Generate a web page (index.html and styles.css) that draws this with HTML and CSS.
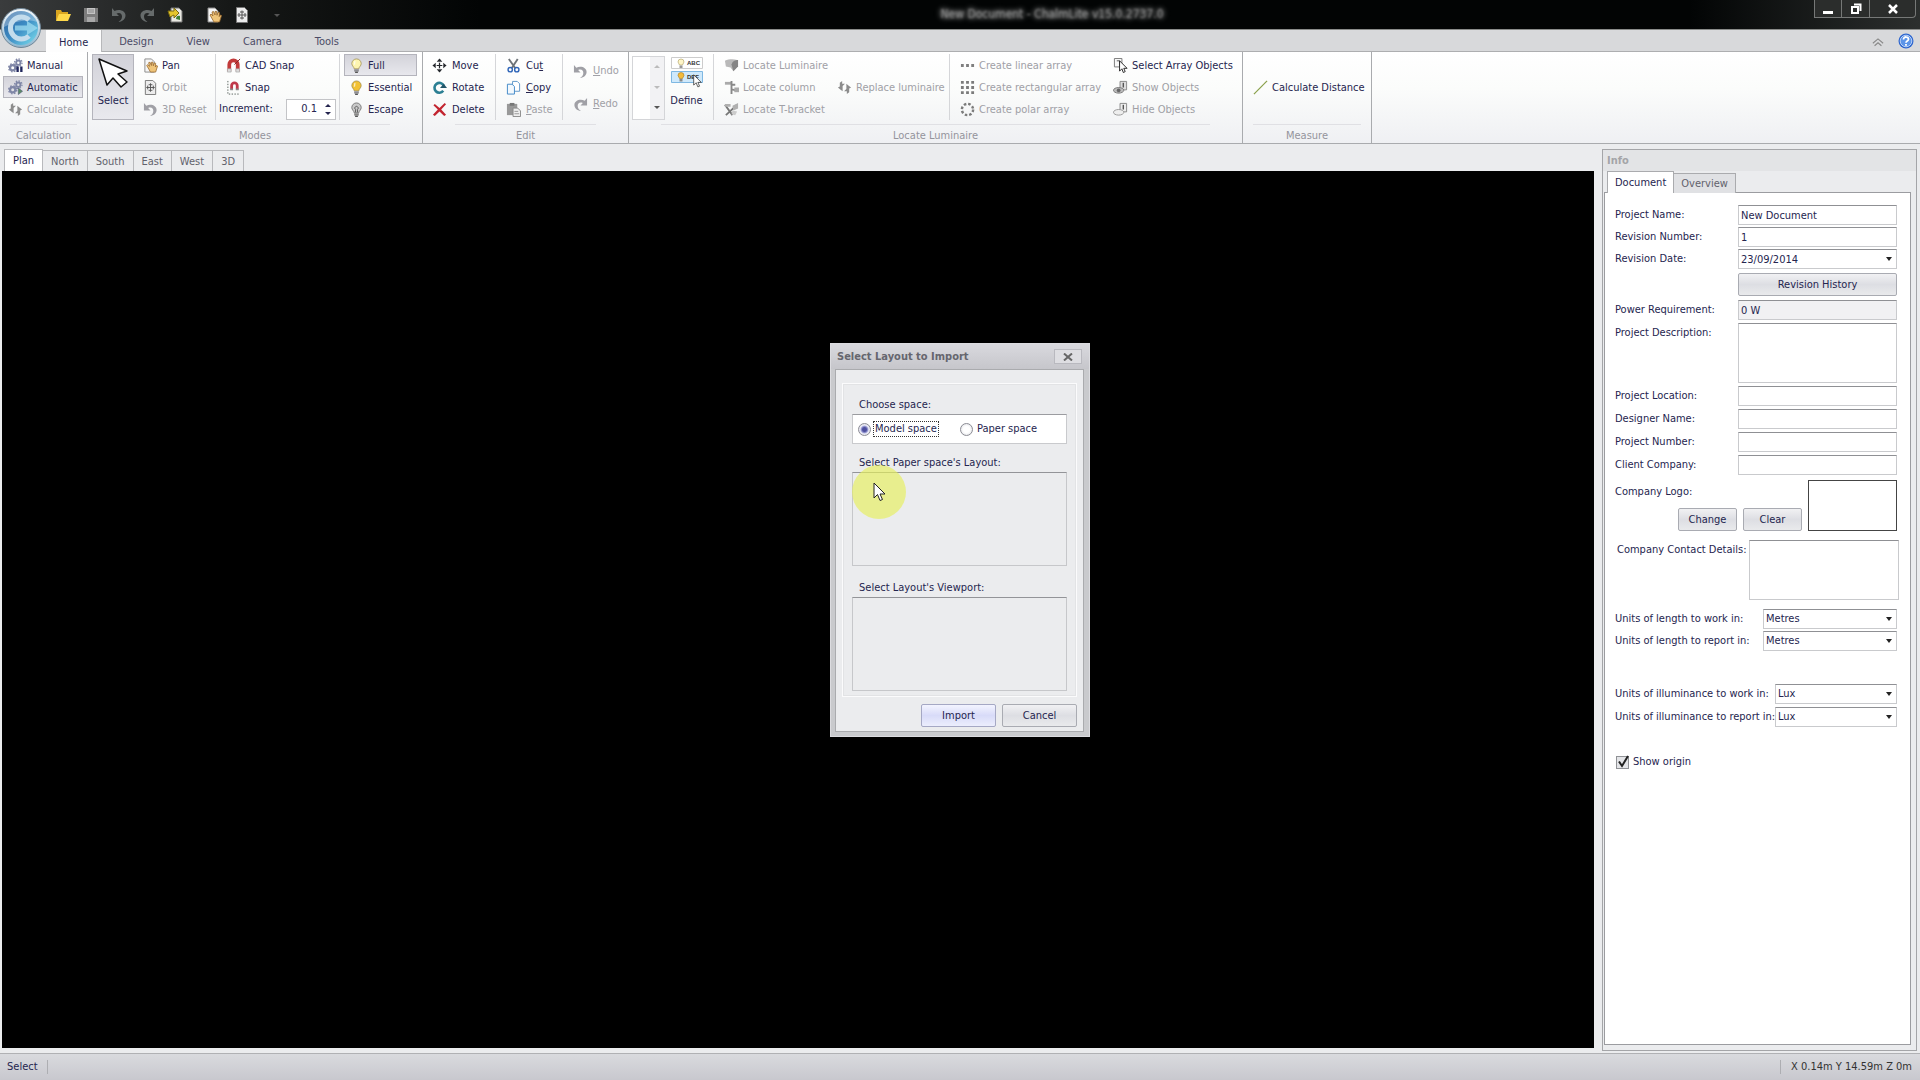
FILE: index.html
```html
<!DOCTYPE html>
<html lang="en">
<head>
<meta charset="utf-8">
<title>New Document - ChalmLite</title>
<link rel="stylesheet" href="styles.css">
</head>
<body>
<svg class="defs" aria-hidden="true">
  <defs>
    <linearGradient id="orb" x1="0" y1="0" x2="1" y2="1"><stop offset="0" stop-color="#2c5f9c"/><stop offset=".5" stop-color="#3d8cc4"/><stop offset="1" stop-color="#7fe3f0"/></linearGradient>
    <linearGradient id="ring" x1="0" y1="0" x2="0" y2="1"><stop offset="0" stop-color="#f4f8fb"/><stop offset="1" stop-color="#8fb6cf"/></linearGradient>
    <symbol id="i-folder" viewBox="0 0 16 16"><path d="M1 14V3h5l1 2h6v2H5z" fill="#d9a520"/><path d="M1 14 4 7h12l-3 7z" fill="#ffd84a"/></symbol>
    <symbol id="i-save" viewBox="0 0 16 16"><path d="M1 1h14v14H1z" fill="#7d7d7d"/><path d="M4 1h8v6H4z" fill="#c4c4c4"/><path d="M4 10h8v5H4z" fill="#a9a9a9"/><path d="M5 3h6M5 5h6" stroke="#888"/></symbol>
    <symbol id="i-undo" viewBox="0 0 16 16"><path d="M1 1v8h7L5.500 6.500C9 5 11 7 11 9.500S9.500 13.500 7.500 15C12 14.500 14.500 11.500 14.500 8.500 14.500 4 8.500 1.500 3.500 4z" fill="currentColor"/></symbol>
    <symbol id="i-redo" viewBox="0 0 16 16"><path d="M15 1v8H8l2.500-2.500C7 5 5 7 5 9.500s1.500 4 3.500 5.500C4 14.500 1.500 11.500 1.500 8.500 1.500 4 7.500 1.500 12.500 4z" fill="currentColor"/></symbol>
    <symbol id="i-export" viewBox="0 0 16 16"><path d="M5 1h7l3 3v11H4V1z" fill="#e9e9e2" stroke="#777"/><path d="M1 4h6V1l5 5-5 5V8L3 10z" fill="#e5c52c" stroke="#7a6b10"/><path d="M9 12c0-3 2-4 4-3v4z" fill="#3c7f35"/></symbol>
    <symbol id="i-hand" viewBox="0 0 16 16"><path d="M2 1h7l3 3v11H2z" fill="#f6f6f6" stroke="#8a8a8a"/><path d="m4 8 1-1 2 2-1-4 1.500-.5L9 8V4.500l1.500-.2.500 4 1-3 1.500.3-.3 4 1-1.600 1.300.5-2 6.500H8z" fill="#efc57a" stroke="#96662b" stroke-width=".8"/></symbol>
    <symbol id="i-orbit" viewBox="0 0 16 16"><path d="M2.500.5h8l3 3v12h-11z" fill="#ececec" stroke="#777"/><path d="M8 3.500v9M3.500 8h9M5 6v4M11 6v4M6 5h4M6 11h4" stroke="#555" fill="none"/></symbol>
    <symbol id="i-gears" viewBox="0 0 16 16"><g fill="none" stroke="#7f86a6"><circle cx="5" cy="10.500" r="2.800" stroke-width="2.400"/><circle cx="5" cy="10.500" r="4.300" stroke-dasharray="1.700 1.700" stroke-width="1.400"/><circle cx="11" cy="5" r="2.300" stroke-width="2"/><circle cx="11" cy="5" r="4" stroke-dasharray="1.600 1.500" stroke-width="1.300"/></g></symbol>
    <symbol id="i-manual" viewBox="0 0 16 16"><use href="#i-gears"/><path d="M9 9h2.500v6H9zM13 9h2.500v6H13z" fill="#20265c"/></symbol>
    <symbol id="i-auto" viewBox="0 0 16 16"><use href="#i-gears"/><path d="m11 8.500 4.500 3.500-4.500 3.500z" fill="#5c8a66" stroke="#4b5575" stroke-width=".6"/></symbol>
    <symbol id="i-bolt" viewBox="0 0 16 16"><path d="M5.500 1v3h3L6 6.500V12l-2.500-2L1 8l2-1V3zM10.500 15v-3h-3L10 9.500V4l2.500 2L15 8l-2 1v4z" fill="#8c8c8c"/></symbol>
    <symbol id="i-magnet" viewBox="0 0 16 16"><path d="M3.500 14V7a4.500 4.500 0 0 1 9 0v7" fill="none" stroke="#c23a3a" stroke-width="4"/><path d="M1.500 11.500h4V15h-4zM10.500 11.500h4V15h-4z" fill="#ddd" stroke="#999" stroke-width=".6"/><path d="m9 7 6-6" stroke="#7d2626"/></symbol>
    <symbol id="i-snap" viewBox="0 0 16 16"><path d="M2 1v14h13" stroke="#56615c" stroke-dasharray="1.500 1.500" fill="none"/><path d="M6 10V6a3 3 0 0 1 6 0v4" fill="none" stroke="#c0394b" stroke-width="3"/><path d="M4.500 9h3v2h-3zM10.500 9h3v2h-3z" fill="#888"/></symbol>
    <symbol id="i-bulb" viewBox="0 0 16 16"><path d="M8 1a5 5 0 0 0-5 5c0 2.500 2.500 3.500 2.500 5.500h5c0-2 2.500-3 2.500-5.500a5 5 0 0 0-5-5z" fill="currentColor" stroke="#9c8b50" stroke-width=".8"/><path d="M5.500 3.500 7 3l-.5 4-1.500.5z" fill="#fff" opacity=".7"/><path d="M5.500 12h5v2.500h-5z" fill="#8d8d92"/><path d="M6.500 14.500h3V16h-3z" fill="#555"/></symbol>
    <symbol id="i-bulboff" viewBox="0 0 16 16"><path d="M8 1a5 5 0 0 0-5 5c0 2.500 2.500 3.500 2.500 5.500h5c0-2 2.500-3 2.500-5.500a5 5 0 0 0-5-5z" fill="#c9c9c9" stroke="#777"/><path d="M7 11V8L6 6.500C7 4 9 4 10 6.500L9 8v3" fill="none" stroke="#555"/><path d="M5.500 12h5v2.500h-5z" fill="#888"/><path d="M6.500 14.500h3V16h-3z" fill="#555"/></symbol>
    <symbol id="i-move" viewBox="0 0 16 16"><path d="M8 1v14M1 8h14" stroke="#23262b" stroke-width="1.300"/><path d="M5 4h6L8 .5zM5 12h6l-3 3.500zM4 5v6L.5 8zM12 5v6l3.500-3z" fill="#23262b"/><path d="M7 4.500h2M7 11.500h2M4.500 7v2M11.500 7v2" stroke="#fff"/></symbol>
    <symbol id="i-rotate" viewBox="0 0 16 16"><path d="M12 11.500A5.200 5.200 0 1 1 12.500 6" fill="none" stroke="#2b7f93" stroke-width="2.800"/><path d="M8.500 8.500H16L12.500 4z" fill="#215568"/></symbol>
    <symbol id="i-delete" viewBox="0 0 16 16"><path d="M1.500 3.500 3 2l5 4.500L13.500 1 15 2.500 9.800 8 15 13.500 13 15 8 10l-5 5-2-1.500L6.200 8z" fill="#c2242f"/></symbol>
    <symbol id="i-cut" viewBox="0 0 16 16"><path d="m3 1 7 10M12.500 1 6 11" stroke="#6d7378" stroke-width="2"/><circle cx="4.500" cy="12.500" r="2.300" fill="none" stroke="#2f65b8" stroke-width="1.500"/><circle cx="11.500" cy="12.500" r="2.300" fill="none" stroke="#2f65b8" stroke-width="1.500"/></symbol>
    <symbol id="i-copy" viewBox="0 0 16 16"><path d="M7 1.500h5L14.500 4v8H7z" fill="#fff" stroke="#5b94c7"/><path d="M1.500 4.500h5L9 7v8H1.500z" fill="#f2f8fd" stroke="#3f87c6"/></symbol>
    <symbol id="i-paste" viewBox="0 0 16 16"><path d="M1 2h11v12H1z" fill="#999"/><path d="M4 1h5v3H4z" fill="#777"/><path d="M7.500 6.500h5l3 3v6h-8z" fill="#eee" stroke="#888"/><path d="M9 10h4M9 12.500h5" stroke="#999"/></symbol>
    <symbol id="i-arrow" viewBox="0 0 32 32"><path d="m2 2 8 26 6-7 8 9 6-5-9-8 9-3z" fill="#fff" stroke="#111" stroke-width="1.500" stroke-linejoin="round"/></symbol>
    <symbol id="i-pointer" viewBox="0 0 13 20"><path d="M1 1v15l3.500-3.500L7 18.500l2.500-1L7 12h5z" fill="#fff" stroke="#222" stroke-linejoin="round"/></symbol>
    <symbol id="i-define" viewBox="0 0 32 28"><path d="M.5.500h31v11H.5z" fill="#fff" stroke="#ccc"/><path d="M.5 14.500h31v11H.5z" fill="#cfe9fb" stroke="#7fb8e2"/><g stroke-width=".6"><path d="M7 5a3 3 0 1 1 6 0L11.500 8h-3z" fill="#fff6c8" stroke="#a99a60"/><path d="M8.500 8.500h3V11h-3z" fill="#999"/><path d="M7 18.500a3 3 0 1 1 6 0l-1.500 3h-3z" fill="#f3bb3b" stroke="#a87b20"/><path d="M8.500 22h3v2.500h-3z" fill="#888"/></g><text x="16" y="8" class="tiny">ABC</text><text x="16" y="22" class="tiny">DEF</text></symbol>
    <symbol id="i-lum" viewBox="0 0 16 16"><path d="M1 3c4-2 9-2 13-1l1 6-5 6-3-4-5-1z" fill="#b9b9b9"/><path d="M8 7c1-4 4-5 7-5v7l-5 5z" fill="#858585"/></symbol>
    <symbol id="i-column" viewBox="0 0 16 16"><path d="M1 2h7v3H1z" fill="#aaa"/><path d="M8 1v14M8 5h4M8 10l5 1" stroke="#888" stroke-width="2"/><path d="M11 8h5v5h-5z" fill="#aaa"/></symbol>
    <symbol id="i-tbr" viewBox="0 0 16 16"><path d="m1 3 8 11M2 14 14 3" stroke="#777" stroke-width="2"/><path d="M1 2h6v3H1zM9 4l6-3v6l-5 2z" fill="#b0b0b0"/><path d="m9 9 5 1-2 4-4-1z" fill="#ccc"/></symbol>
    <symbol id="i-linear" viewBox="0 0 16 16"><path d="M1 6.500h3v3H1zM6.500 6.500h3v3h-3zM12 6.500h3v3h-3z" fill="#7f7f7f"/></symbol>
    <symbol id="i-rect" viewBox="0 0 16 16"><path d="M2.500 1v14M8 1v14M13.500 1v14" stroke="#7b7b7b" stroke-width="3" stroke-dasharray="3 2.500"/></symbol>
    <symbol id="i-polar" viewBox="0 0 16 16"><circle cx="8" cy="8" r="6" fill="none" stroke="#7b7b7b" stroke-width="2.600" stroke-dasharray="2.700 2.012"/></symbol>
    <symbol id="i-selobj" viewBox="0 0 16 16"><path d="M1.500.5h8v9h-8z" fill="#f8f8f8" stroke="#777"/><path d="M4 3h3v5" stroke="#555" fill="none"/><path d="M7 3v11l2.500-2.500L11 15.500l2-1-1.500-3.500H15z" fill="#fff" stroke="#222"/></symbol>
    <symbol id="i-show" viewBox="0 0 16 16"><path d="M7.500 1.500h7v9h-7z" fill="#ddd" stroke="#888"/><path d="M11 3v5" stroke="#555" stroke-width="1.500"/><ellipse cx="6" cy="11" rx="5.500" ry="3" fill="#bbb" stroke="#777"/><circle cx="6" cy="11" r="2" fill="#666"/></symbol>
    <symbol id="i-hide" viewBox="0 0 16 16"><path d="M7.500 1.500h7v9h-7z" fill="#eee" stroke="#888"/><path d="M11 3v5" stroke="#555" stroke-width="1.500"/><ellipse cx="6" cy="11" rx="5.500" ry="3" fill="#eee" stroke="#999"/></symbol>
    <symbol id="i-line" viewBox="0 0 16 16"><path d="M1 15 15 1" stroke="#8aa04a" stroke-width="1.300"/></symbol>
  </defs>
</svg>

<div class="app">
  <header class="titlebar">
    <nav class="quick" aria-label="Quick access">
      <button aria-label="Open"><svg><use href="#i-folder"/></svg></button>
      <button aria-label="Save"><svg><use href="#i-save"/></svg></button>
      <button aria-label="Undo"><svg class="dim"><use href="#i-undo"/></svg></button>
      <button aria-label="Redo"><svg class="dim"><use href="#i-redo"/></svg></button>
      <button aria-label="Export"><svg><use href="#i-export"/></svg></button>
      <button class="late" aria-label="Pan"><svg><use href="#i-hand"/></svg></button>
      <button aria-label="Orbit"><svg><use href="#i-orbit"/></svg></button>
      <button class="more" aria-label="Customise"><i class="down"></i></button>
    </nav>
    <h1>New Document - ChalmLite v15.0.2737.0</h1>
    <div class="winbtns">
      <button aria-label="Minimise"><svg viewBox="0 0 12 12"><path d="M1 8h10v3H1z" fill="#fff"/></svg></button>
      <button aria-label="Restore"><svg viewBox="0 0 12 12"><path d="M4 1.500h6.500V8M2 4h6v6H2z" fill="none" stroke="#fff" stroke-width="2"/></svg></button>
      <button class="close" aria-label="Close"><svg viewBox="0 0 12 12"><path d="m2 2 8 8M10 2l-8 8" stroke="#fff" stroke-width="2.500"/></svg></button>
    </div>
  </header>

  <nav class="ribbon-tabs" aria-label="Ribbon">
    <button class="orb" aria-label="Application menu"><svg viewBox="0 0 42 42"><circle cx="21" cy="21" r="19.500" fill="url(#ring)" stroke="#6f8596"/><circle cx="21" cy="21" r="17" fill="url(#orb)"/><path d="M4 20a17 17 0 0 1 33-5C27 12 15 14 4 20z" fill="#fff" opacity=".3"/><path d="M29 13A11 11 0 1 0 29 29" fill="none" stroke="#c4dcec" stroke-width="5"/><path d="M15 18.500h12V14l11 7-11 7v-4.500H15z" fill="#9fdcf0" opacity=".75"/></svg></button>
    <a class="on" href="#home">Home</a><a href="#design">Design</a><a href="#view">View</a><a href="#camera">Camera</a><a href="#tools">Tools</a>
    <span class="tab-end">
      <svg viewBox="0 0 14 12"><path d="m1 8 6-5 6 5M3 11l4-3.500L11 11" fill="none" stroke="#888" stroke-width="1.300"/></svg>
      <svg class="help" viewBox="0 0 16 16"><circle cx="8" cy="8" r="7.500" fill="#2d66cf"/><circle cx="8" cy="8" r="5.800" fill="#5b94e8" stroke="#d6e5fa" stroke-width=".8"/><path d="M5.500 6.500C5.500 3 10.500 3.500 10.500 6.200 10.500 8 8 8 8 9.700M8 11v1.700" fill="none" stroke="#fff" stroke-width="1.800"/></svg>
    </span>
  </nav>

  <section class="ribbon">
    <div class="group g-calc">
      <div class="body"><div class="col">
        <button class="cmd"><svg><use href="#i-manual"/></svg>Manual</button>
        <button class="cmd sel"><svg><use href="#i-auto"/></svg>Automatic</button>
        <button class="cmd" disabled><svg><use href="#i-bolt"/></svg>Calculate</button>
      </div></div>
      <h2>Calculation</h2>
    </div>
    <div class="group g-modes">
      <div class="body">
        <button class="big sel"><svg><use href="#i-arrow"/></svg>Select</button>
        <div class="col c-pan">
          <button class="cmd"><svg><use href="#i-hand"/></svg>Pan</button>
          <button class="cmd" disabled><svg><use href="#i-orbit"/></svg>Orbit</button>
          <button class="cmd" disabled><svg><use href="#i-undo"/></svg>3D Reset</button>
        </div>
        <div class="col line c-snap">
          <button class="cmd"><svg><use href="#i-magnet"/></svg>CAD Snap</button>
          <button class="cmd"><svg><use href="#i-snap"/></svg>Snap</button>
          <div class="inc"><label for="inc">Increment:</label><span class="spin"><input id="inc" value="0.1"><span><i class="up"></i><i class="down"></i></span></span></div>
        </div>
        <div class="col line c-full">
          <button class="cmd sel"><svg class="pale"><use href="#i-bulb"/></svg>Full</button>
          <button class="cmd"><svg class="gold"><use href="#i-bulb"/></svg>Essential</button>
          <button class="cmd"><svg><use href="#i-bulboff"/></svg>Escape</button>
        </div>
      </div>
      <h2>Modes</h2>
    </div>
    <div class="group g-edit">
      <div class="body">
        <div class="col c-move">
          <button class="cmd"><svg><use href="#i-move"/></svg>Move</button>
          <button class="cmd"><svg><use href="#i-rotate"/></svg>Rotate</button>
          <button class="cmd"><svg><use href="#i-delete"/></svg>Delete</button>
        </div>
        <div class="col line c-cut">
          <button class="cmd"><svg><use href="#i-cut"/></svg><span>Cu<u>t</u></span></button>
          <button class="cmd"><svg><use href="#i-copy"/></svg><span><u>C</u>opy</span></button>
          <button class="cmd" disabled><svg><use href="#i-paste"/></svg><span><u>P</u>aste</span></button>
        </div>
        <div class="col line two">
          <button class="cmd" disabled><svg><use href="#i-undo"/></svg><span><u>U</u>ndo</span></button>
          <button class="cmd" disabled><svg><use href="#i-redo"/></svg><span><u>R</u>edo</span></button>
        </div>
      </div>
      <h2>Edit</h2>
    </div>
    <div class="group g-loc">
      <div class="body">
        <div class="gallery"><span><i class="up"></i><i class="down"></i><i class="down dark"></i></span></div>
        <button class="big define"><svg><use href="#i-define"/></svg>Define<svg class="mini"><use href="#i-pointer"/></svg></button>
        <div class="col line c-loc">
          <button class="cmd" disabled><svg><use href="#i-lum"/></svg>Locate Luminaire</button>
          <button class="cmd" disabled><svg><use href="#i-column"/></svg>Locate column</button>
          <button class="cmd" disabled><svg><use href="#i-tbr"/></svg>Locate T-bracket</button>
        </div>
        <div class="col mid c-rep">
          <button class="cmd" disabled><svg><use href="#i-bolt"/></svg>Replace luminaire</button>
        </div>
        <div class="col line c-arr">
          <button class="cmd" disabled><svg><use href="#i-linear"/></svg>Create linear array</button>
          <button class="cmd" disabled><svg><use href="#i-rect"/></svg>Create rectangular array</button>
          <button class="cmd" disabled><svg><use href="#i-polar"/></svg>Create polar array</button>
        </div>
        <div class="col c-obj">
          <button class="cmd"><svg><use href="#i-selobj"/></svg>Select Array Objects</button>
          <button class="cmd" disabled><svg><use href="#i-show"/></svg>Show Objects</button>
          <button class="cmd" disabled><svg><use href="#i-hide"/></svg>Hide Objects</button>
        </div>
      </div>
      <h2>Locate Luminaire</h2>
    </div>
    <div class="group g-meas">
      <div class="body"><div class="col mid">
        <button class="cmd"><svg><use href="#i-line"/></svg>Calculate Distance</button>
      </div></div>
      <h2>Measure</h2>
    </div>
  </section>

  <main class="work">
    <section class="views">
      <nav class="view-tabs" aria-label="Views"><a class="on" href="#plan">Plan</a><a href="#north">North</a><a href="#south">South</a><a href="#east">East</a><a href="#west">West</a><a href="#3d">3D</a></nav>
      <div class="canvas"></div>
    </section>

    <aside class="info">
      <h2>Info</h2>
      <nav class="info-tabs" aria-label="Info"><a class="on" href="#document">Document</a><a href="#overview">Overview</a></nav>
      <form class="sheet">
        <div class="set">
          <div class="row"><label for="pn">Project Name:</label><input id="pn" value="New Document"></div>
          <div class="row"><label for="rn">Revision Number:</label><input id="rn" value="1"></div>
          <div class="row"><label for="rd">Revision Date:</label><span class="drop"><input id="rd" value="23/09/2014"></span></div>
        </div>
        <div class="row end"><button type="button" class="btn wide">Revision History</button></div>
        <div class="row"><label for="pr">Power Requirement:</label><input id="pr" value="0 W" readonly></div>
        <div class="set loose">
          <div class="row"><label for="pd">Project Description:</label><textarea id="pd"></textarea></div>
          <div class="row"><label for="pl">Project Location:</label><input id="pl"></div>
          <div class="row"><label for="dn">Designer Name:</label><input id="dn"></div>
          <div class="row"><label for="pno">Project Number:</label><input id="pno"></div>
          <div class="row"><label for="cc">Client Company:</label><input id="cc"></div>
        </div>
        <div class="logo-row">
          <span>Company Logo:</span>
          <button type="button" class="btn">Change</button><button type="button" class="btn">Clear</button>
          <div class="logo"></div>
        </div>
        <div class="row contact"><label for="cd">Company Contact Details:</label><textarea id="cd"></textarea></div>
        <div class="set units">
          <div class="row"><label for="u1">Units of length to work in:</label><span class="drop"><select id="u1"><option>Metres</option></select></span></div>
          <div class="row"><label for="u2">Units of length to report in:</label><span class="drop"><select id="u2"><option>Metres</option></select></span></div>
        </div>
        <div class="set loose lux">
          <div class="row"><label for="u3">Units of illuminance to work in:</label><span class="drop"><select id="u3"><option>Lux</option></select></span></div>
          <div class="row"><label for="u4">Units of illuminance to report in:</label><span class="drop"><select id="u4"><option>Lux</option></select></span></div>
        </div>
        <label class="check"><span class="box"><input type="checkbox" checked><svg viewBox="0 0 14 14"><path d="M3 6.500 6 11l6-10" fill="none" stroke="#222" stroke-width="2"/></svg></span>Show origin</label>
      </form>
    </aside>
  </main>

  <footer class="status"><span>Select</span><span>X 0.14m Y 14.59m Z 0m</span></footer>
</div>

<section class="dialog" role="dialog" aria-labelledby="dt">
  <header><h2 id="dt">Select Layout to Import</h2><button aria-label="Close"><svg viewBox="0 0 10 8"><path d="m1 .5 8 7M9 .5l-8 7" stroke="#666" stroke-width="2"/></svg></button></header>
  <div class="inner">
    <div class="frame">
      <h3>Choose space:</h3>
      <div class="radios">
        <label><input type="radio" name="space" checked><span class="focus">Model space</span></label>
        <label><input type="radio" name="space"><span>Paper space</span></label>
      </div>
      <h3>Select Paper space's Layout:</h3>
      <div class="list"></div>
      <h3>Select Layout's Viewport:</h3>
      <div class="list"></div>
    </div>
    <div class="actions"><button class="btn hot">Import</button><button class="btn">Cancel</button></div>
  </div>
  <div class="spot"><svg><use href="#i-pointer"/></svg></div>
</section>
</body>
</html>
```
FILE: styles.css
```css
* { box-sizing: border-box; }
:root { --ink: #25254f; --dim: #a0a0a6; --edge: #a9abae; }
body { margin: 0; font: 11px/14px "DejaVu Sans Condensed", "DejaVu Sans", sans-serif; color: var(--ink); background: #ebecee; }
button, input, select, textarea { font: inherit; color: inherit; margin: 0; padding: 0; border: 0; background: none; border-radius: 0; }
h1, h2, h3 { margin: 0; font: inherit; }
a { color: inherit; text-decoration: none; }
svg { display: block; width: 16px; height: 16px; flex: none; }
.defs { position: absolute; width: 0; height: 0; }
.tiny { font: bold 6px "Liberation Sans", sans-serif; fill: #333; }
.app { min-height: 100vh; display: flex; flex-direction: column; }

.up, .down { display: block; width: 0; border: 3px solid transparent; }
.up { border-top: 0; border-bottom-color: currentColor; }
.down { border-bottom: 0; border-top-color: currentColor; }

.titlebar { height: 30px; display: flex; align-items: flex-start; background: linear-gradient(90deg, #3a3c3d, #161817 12%, #020404 25%, #020404 88%, #2c2f2e); border-bottom: 1px solid #8a8c8a; }
.quick { display: flex; gap: 12px; padding: 7px 0 0 55px; }
.quick button { display: flex; align-items: center; width: 16px; height: 16px; }
.quick .late { margin-left: 11px; }
.quick .more { margin-left: 12px; color: #555; }
.dim { color: #666b6b; }
.titlebar h1 { flex: 1; text-align: center; margin-top: 7px; font-size: 12px; color: #858585; text-shadow: 0 0 6px #aaa, 0 0 4px #888; filter: blur(1px); }
.winbtns { display: flex; padding-right: 4px; }
.winbtns button { width: 28px; height: 18px; border: 1px solid #767877; border-top: 0; display: flex; align-items: center; justify-content: center; background: #2b2d2c; }
.winbtns button + button { border-left: 0; }
.winbtns .close { width: 46px; border-radius: 0 0 4px 0; }
.winbtns svg { width: 12px; height: 12px; }

.ribbon-tabs { position: relative; height: 22px; display: flex; align-items: flex-end; gap: 1px; padding-left: 46px; background: #d8d9db; border-bottom: 1px solid #adaeb0; }
.ribbon-tabs a { height: 21px; padding: 0 16px; line-height: 24px; color: #4b4b66; }
.ribbon-tabs a.on { background: #fdfdfd; padding: 0 13px; height: 22px; color: var(--ink); border-right: 1px solid #b7b8ba; margin-bottom: -1px; line-height: 25px; }
.orb { position: absolute; left: 0; top: -23px; }
.orb svg { width: 42px; height: 42px; }
.tab-end { margin-left: auto; display: flex; align-items: center; gap: 14px; padding: 0 6px 2px 0; }
.tab-end svg { width: 12px; height: 11px; }
.tab-end .help { width: 16px; height: 16px; }

.ribbon { display: flex; background: linear-gradient(#fff, #fbfcfb 40%, #eff0f3); border-bottom: 1px solid var(--edge); }
.group { border-right: 1px solid var(--edge); display: flex; flex-direction: column; }
.group > h2 { text-align: center; color: #94949c; margin: 4px 32px 0; padding: 5px 0 1px; line-height: 12px; border-top: 1px solid #e0e0e4; white-space: nowrap; }
.g-calc > h2, .g-meas > h2 { margin: 4px 10px 0; }
.body { display: flex; padding: 2px 0 0 3px; }
.g-calc { width: 88px; } .g-modes { width: 335px; } .g-edit { width: 206px; } .g-loc { width: 614px; } .g-meas { width: 129px; }
.col { display: flex; flex: none; flex-direction: column; padding: 0 5px; height: 66px; }
.g-calc .col { padding: 0; width: 80px; }
.g-meas .col { padding: 0 2px; }
.cmd { display: flex; align-items: center; gap: 4px; height: 22px; padding: 1px 5px 0; white-space: nowrap; text-align: left; }
.cmd:disabled { color: var(--dim); }
.cmd svg { width: 15px; height: 15px; }
.sel { background: linear-gradient(#d2d2d9, #e9e9ee); box-shadow: inset 0 0 0 1px #b4b4bc; }
.line { border-left: 1px solid #d5d6d9; }
.mid { justify-content: center; }
.two { justify-content: space-around; }
.big { flex: none; width: 42px; height: 66px; display: flex; flex-direction: column; align-items: center; justify-content: space-between; padding: 2px 0 12px; }
.big svg { width: 32px; height: 34px; }
.c-pan { width: 81px; padding-left: 4px; }
.c-snap { width: 124px; }
.c-full { padding: 0 4px; width: 82px; }
.inc { display: flex; align-items: center; justify-content: space-between; height: 22px; margin: 0 -2px; }
.spin { display: flex; width: 50px; height: 21px; border: 1px solid #c3c4c7; background: #fff; align-items: center; }
.spin input { width: 30px; text-align: right; outline: 0; }
.spin > span { display: grid; gap: 5px; margin-left: 8px; }
.pale { color: #fdf5b0; } .gold { color: #f2c133; }
.g-edit .cmd { gap: 5px; }
.c-move { width: 69px; padding: 0; }
.c-move .cmd { padding-left: 6px; }
.c-cut { width: 67px; }
.two { padding-right: 0; }
.two .cmd { padding-right: 0; }
.g-modes .body { padding-left: 4px; }
.gallery { width: 33px; height: 64px; margin-top: 2px; border: 1px solid #d4d5d8; background: #fff; display: flex; justify-content: flex-end; color: #bbb; }
.gallery > span { width: 14px; background: #f2f2f4; display: flex; flex-direction: column; align-items: center; justify-content: space-between; padding: 8px 0 10px; }
.dark { color: #555; }
.define { position: relative; margin: 0 7px 0 2px; width: 39px; }
.define > svg:first-child { height: 28px; margin-top: 1px; }
.define .mini { position: absolute; left: 26px; top: 20px; width: 9px; height: 14px; }
.c-loc { width: 114px; }
.c-rep { width: 122px; }
.c-arr { width: 159px; }
.c-obj { width: 130px; padding: 0; }

.work { flex: 1; display: flex; padding: 5px 3px 2px 2px; gap: 8px; }
.views { flex: 1; display: flex; flex-direction: column; }
.view-tabs { display: flex; height: 22px; padding-left: 2px; align-items: flex-end; color: #62626c; }
.view-tabs a { height: 21px; line-height: 21px; padding: 0 8px; border: 1px solid #b8b9bc; border-width: 1px 1px 0 0; }
.view-tabs a.on, .info-tabs a.on { height: 22px; background: #fff; color: var(--ink); border-left-width: 1px; }
.canvas { flex: 1; background: #000; margin-bottom: 3px; }
.info { width: 315px; border: 1px solid #a4a5a8; padding: 0 5px 5px 1px; display: flex; flex-direction: column; }
.info > h2 { height: 21px; line-height: 21px; padding-left: 4px; font-weight: bold; color: #a4a4a8; background: #e3e4e6; margin: 0 -5px 0 -1px; }
.info-tabs { display: flex; align-items: flex-end; padding-left: 3px; height: 22px; position: relative; margin-bottom: -1px; color: #62626c; }
.info-tabs a { height: 20px; line-height: 20px; padding: 0 7px; border: 1px solid #aaabae; border-width: 1px 1px 0 0; background: #e0e1e4; }
.info-tabs a.on { line-height: 22px; }
.sheet { flex: 1; background: #fff; border: 1px solid #9b9ca0; padding: 12px 13px 0 10px; display: flex; flex-direction: column; gap: 3px; }
.set { display: flex; flex-direction: column; gap: 2px; }
.loose { gap: 3px; }
.row { display: flex; justify-content: space-between; }
.row label { line-height: 20px; white-space: nowrap; min-width: 0; }
.end { justify-content: flex-end; margin: 1px 0; }
.sheet input:not([type]), .sheet textarea, .sheet select { width: 159px; height: 20px; border: 1px solid #c9cacd; border-top-color: #8f9094; background: #fff; padding: 0 2px; outline: 0; display: block; resize: none; appearance: none; }
.sheet input[readonly]:not([type]) { background: #f1f1f3; }
.sheet textarea { height: 60px; flex: none; }
.drop { position: relative; flex: none; }
.drop::after { content: ""; position: absolute; right: 5px; top: 8px; border: 3px solid transparent; border-bottom: 0; border-top: 4px solid #222; pointer-events: none; }
.btn { height: 23px; width: 59px; border: 1px solid #a9abb2; border-radius: 2px; background: linear-gradient(#f1f1f3, #dddee3 50%, #e9eaec); }
.wide { width: 159px; }
.logo-row { display: flex; align-items: flex-end; gap: 6px; margin-top: 2px; }
.logo-row span { align-self: flex-start; line-height: 24px; flex: 1; white-space: nowrap; width: 0; }
.logo { width: 89px; height: 51px; border: 1px solid #444; }
.contact { margin: 6px -2px 0 2px; }
.sheet .contact textarea { width: 150px; }
.units { margin-top: 6px; }
.sheet .units select { width: 134px; }
.lux { margin-top: 30px; }
.sheet .lux select { width: 122px; }
.check { display: flex; align-items: center; gap: 4px; margin-top: 25px; }
.box { position: relative; width: 13px; height: 13px; margin-left: 1px; }
.box input { appearance: none; display: block; width: 13px; height: 13px; border: 1px solid #909296; background: #e4e5e8; }
.box svg { position: absolute; left: 0; top: -1px; width: 14px; height: 14px; pointer-events: none; }

.status { height: 27px; display: flex; justify-content: space-between; align-items: center; padding: 0 8px 0 7px; background: linear-gradient(#d9dade, #c8c8ce); border-top: 1px solid #b0b1b4; }
.status span:first-child { padding-right: 9px; border-right: 1px solid #adaeb2; }
.status span:last-child { padding-left: 10px; border-left: 1px solid #adaeb2; color: #333; }

.dialog { position: fixed; inset: 0; margin: auto; width: 260px; height: fit-content; background: #c9cacd; border: 1px solid #dcdce0; padding: 0 5px 4px 4px; }
.dialog > header { height: 25px; display: flex; align-items: center; justify-content: space-between; margin: 0 -5px 0 -4px; padding: 0 7px 0 6px; background: linear-gradient(#d9d9de, #c6c6cb); }
.dialog > header h2 { font-weight: bold; color: #66666e; }
.dialog > header button { width: 28px; height: 15px; border: 1px solid #b9b9bf; background: #dedee2; display: flex; align-items: center; justify-content: center; }
.dialog > header svg { width: 10px; height: 8px; }
.inner { background: #ebecee; border: 1px solid #aaabae; padding: 13px 6px 4px; }
.frame { border: 1px solid #fbfbfc; padding: 14px 9px 5px; outline: 1px solid #e2e3e5; outline-offset: -2px; }
.frame h3 { padding: 0 7px 2px; }
.radios { height: 30px; display: flex; align-items: center; background: #fff; border: 1px solid #c9cacd; border-top-color: #9b9ca0; padding-left: 5px; margin-bottom: 12px; }
.radios label { display: flex; align-items: center; gap: 2px; width: 102px; white-space: nowrap; }
.radios input { appearance: none; width: 13px; height: 13px; border: 1px solid #8b8c94; border-radius: 50%; background: radial-gradient(#fff 40%, #dadbe0); }
.radios input:checked { background: radial-gradient(#4d4f9e 0 25%, #a6a8dd 45%, #e8e8f2 55%); }
.radios label span { padding: 0 1px; border: 1px dotted transparent; }
.radios label .focus { border-color: #333; }
.list { height: 94px; border: 1px solid #c6c7ca; border-top-color: #939498; margin-bottom: 15px; }
.list:last-child { margin-bottom: 0; }
.actions { display: flex; justify-content: flex-end; gap: 6px; margin-top: 7px; }
.actions .btn { width: 75px; }
.hot { background: linear-gradient(#f3f4ff, #d8dbf8 50%, #eceefd); border-color: #a5a8c4; }
.spot { position: absolute; left: 21px; top: 121px; width: 54px; height: 54px; border-radius: 50%; background: rgba(230, 240, 90, .65); }
.spot svg { position: absolute; left: 21px; top: 17px; width: 13px; height: 20px; }
```
